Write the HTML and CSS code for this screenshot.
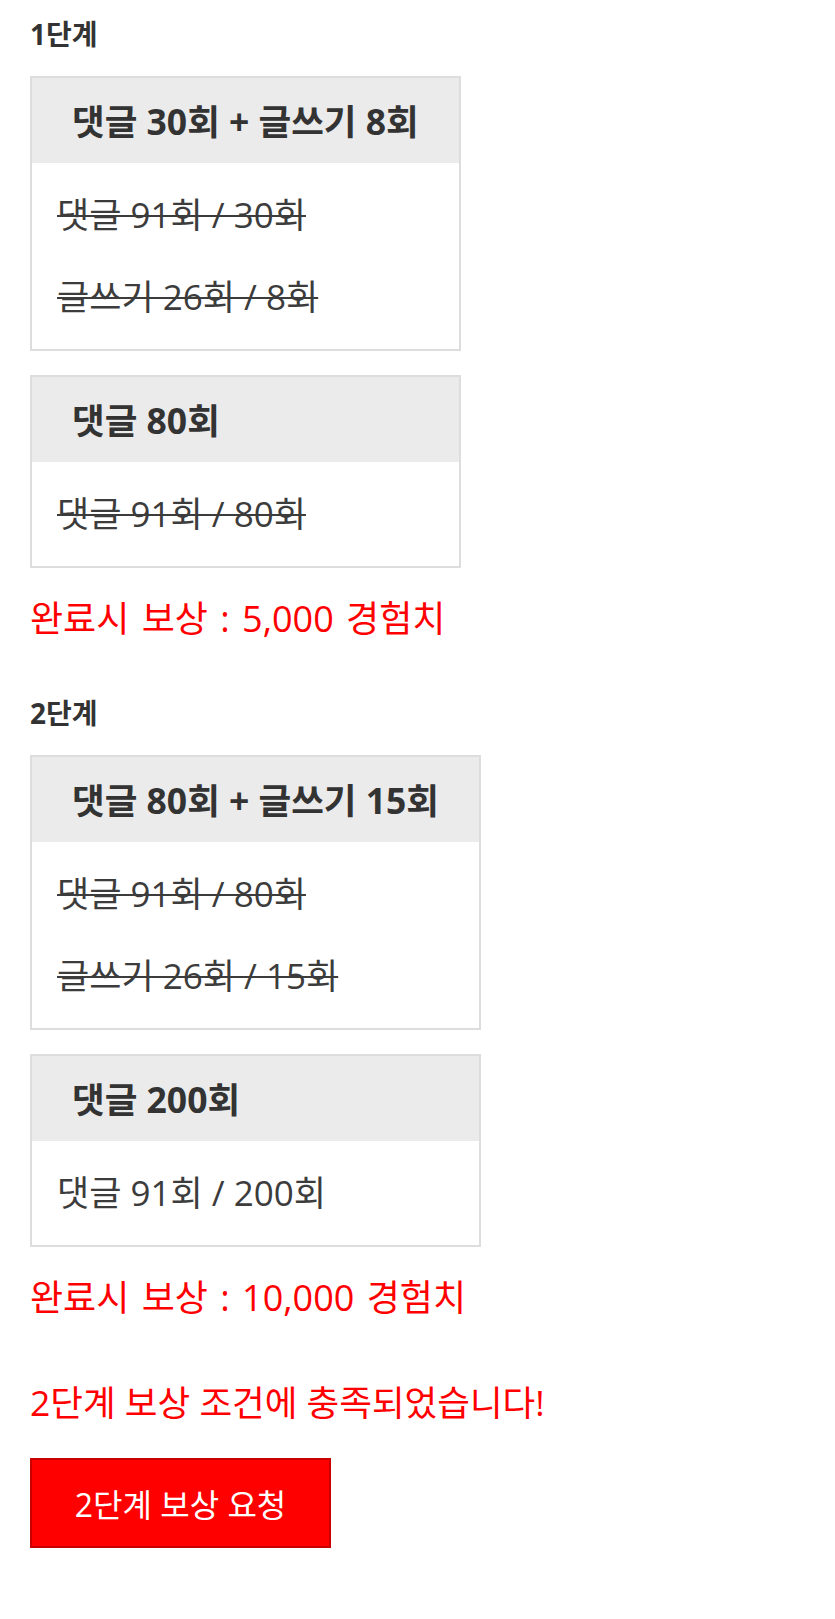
FILE: index.html
```html
<!DOCTYPE html>
<html lang="ko">
<head>
    <meta charset="UTF-8">
    <meta name="viewport" content="width=device-width, initial-scale=1.0">
    <title>단계별 보상</title>
    <link rel="stylesheet" href="styles.css">
</head>
<body>
    <div class="stage">
        <h3 class="stage-title">1단계</h3>
        <div class="mission-list">
            <div class="mission">
                <div class="mission-head center">댓글 30회 + 글쓰기 8회</div>
                <div class="mission-body">
                    <p class="done">댓글 91회 / 30회</p>
                    <p class="done">글쓰기 26회 / 8회</p>
                </div>
            </div>
            <div class="mission">
                <div class="mission-head">댓글 80회</div>
                <div class="mission-body">
                    <p class="done">댓글 91회 / 80회</p>
                </div>
            </div>
        </div>
        <p class="reward">완료시 보상 : 5,000 경험치</p>
    </div>

    <div class="stage">
        <h3 class="stage-title">2단계</h3>
        <div class="mission-list">
            <div class="mission">
                <div class="mission-head center">댓글 80회 + 글쓰기 15회</div>
                <div class="mission-body">
                    <p class="done">댓글 91회 / 80회</p>
                    <p class="done">글쓰기 26회 / 15회</p>
                </div>
            </div>
            <div class="mission">
                <div class="mission-head">댓글 200회</div>
                <div class="mission-body">
                    <p>댓글 91회 / 200회</p>
                </div>
            </div>
        </div>
        <p class="reward">완료시 보상 : 10,000 경험치</p>
    </div>

    <p class="notice">2단계 보상 조건에 충족되었습니다!</p>
    <button type="button" class="reward-button">2단계 보상 요청</button>
</body>
</html>
```

FILE: styles.css
```css
body {
    font-family: "Open Sans", "Noto Sans CJK KR", sans-serif;
    margin: 0;
    padding: 12px 30px 40px;
    background-color: #fff;
    color: #333;
}

.stage-title {
    font-size: 28px;
    font-weight: bold;
    line-height: 44px;
    margin: 0 0 20px;
    color: #333;
}

.mission-list {
    display: inline-flex;
    flex-direction: column;
    gap: 24px;
}

.mission {
    border: 2px solid #ddd;
    background-color: #fff;
}

.mission-head {
    background-color: #ebebeb;
    font-size: 35.5px;
    font-weight: bold;
    line-height: 44px;
    padding: 21px 40px 20px;
    color: #333;
}

.mission-head.center {
    text-align: center;
}

.mission-body {
    padding: 30px 25px 30px;
    display: flex;
    flex-direction: column;
    gap: 38px;
}

.mission-body p {
    margin: 0;
    font-size: 35px;
    line-height: 44px;
    color: #3c3c3c;
}

.mission-body p.done {
    text-decoration: line-through;
    text-decoration-thickness: 2px;
}

.reward {
    color: #ff0000;
    font-size: 36px;
    line-height: 48px;
    word-spacing: 3px;
    margin: 27px 0 48px;
}

.notice {
    color: #ff0000;
    font-size: 35.5px;
    line-height: 48px;
    margin: 56px 0 32px;
}

.reward-button {
    background-color: #ff0000;
    color: #fff;
    font-family: inherit;
    font-size: 32px;
    border: 2px solid #c80000;
    width: 301px;
    height: 90px;
    padding: 0;
    cursor: pointer;
}
```
